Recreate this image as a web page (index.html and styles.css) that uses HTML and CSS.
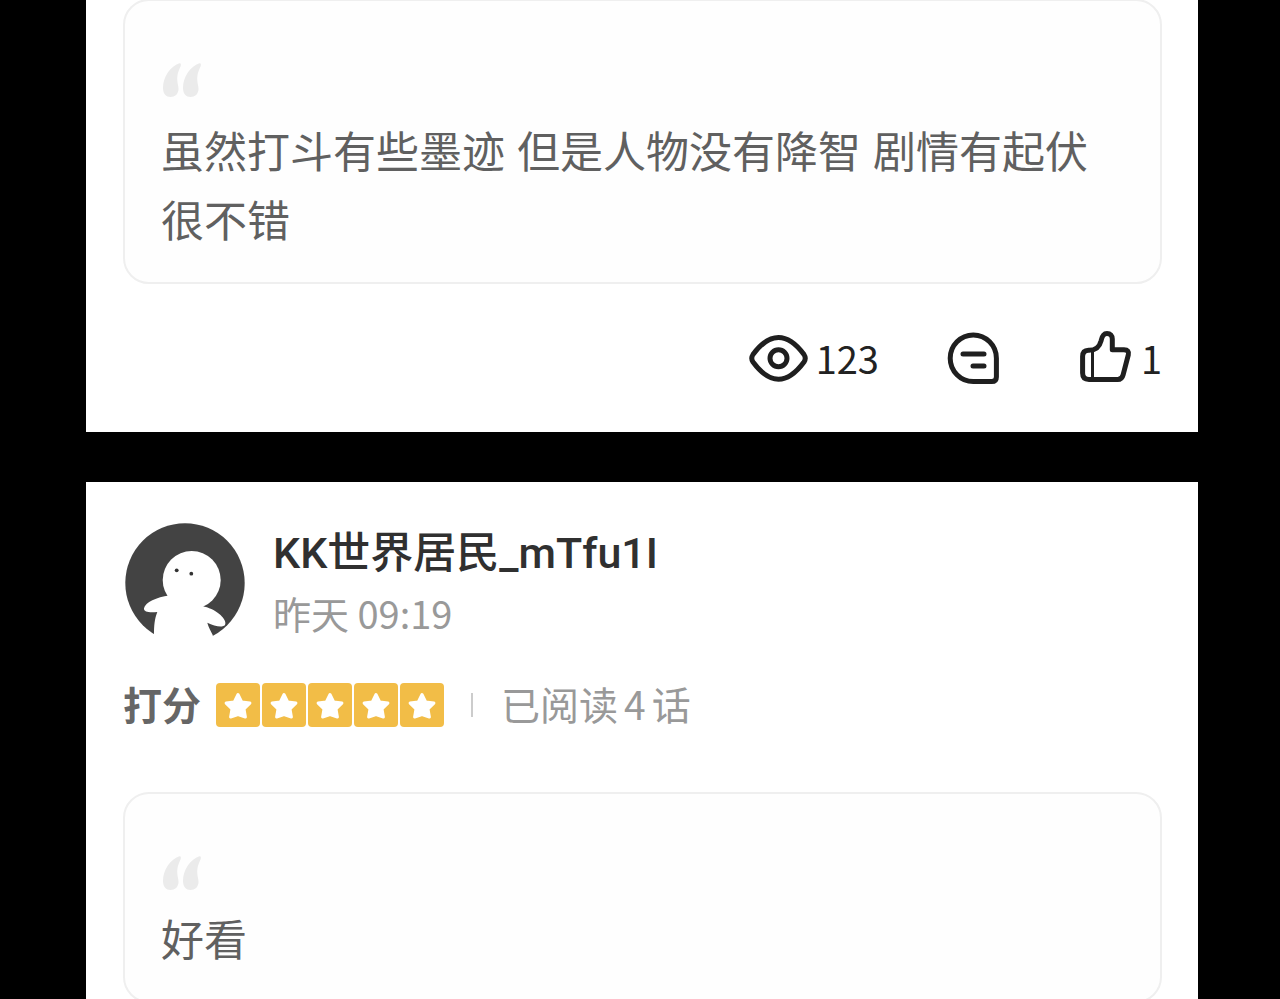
FILE: index.html
```html
<!DOCTYPE html>
<html lang="zh-CN">
<head>
  <meta charset="UTF-8">
  <meta name="viewport" content="width=device-width, initial-scale=1.0">
  <title>评论</title>
  <link rel="stylesheet" href="styles.css">
</head>
<body>
  <!-- shared shapes -->
  <svg class="defs" width="0" height="0" aria-hidden="true">
    <symbol id="quote" viewBox="0 0 42 35">
      <path id="mark" d="M18.500 .3C9 3.500 2 14 2 25c0 6 3.200 9 7.500 9s8-3 8-8c0-3.500-1.300-6-1.300-10 0-5 1.300-8 3.300-12.500 .8-2 .5-3.500-1-3.200z"/>
      <use href="#mark" x="20"/>
    </symbol>
    <symbol id="star" viewBox="0 0 44 44">
      <rect width="44" height="44" rx="4" fill="#f2bd47"/>
      <path d="M22 11.500l3.700 7.400 8.200 1.200-5.900 5.800 1.400 8.100-7.400-2.500-7.400 2.500 1.400-8.100-5.900-5.800 8.200-1.200z" fill="#fff" stroke="#fff" stroke-width="3" stroke-linejoin="round"/>
    </symbol>
  </svg>

  <main class="feed">
    <article class="card">
      <blockquote class="quote-box">
        <svg class="quote-mark"><use href="#quote"/></svg>
        <p class="quote-text">虽然打斗有些墨迹 但是人物没有降智 剧情有起伏很不错</p>
      </blockquote>
      <div class="actions">
        <span class="action">
          <svg class="icon" viewBox="0 0 60 60">
            <path d="M4 26.500C11 17 20 9.500 29.500 9.500S48 17 55 26.500q2.500 3.800 0 7.500C48 43.500 39 51.200 29.500 51.200S11 43.500 4 34q-2.500-3.700 0-7.500z"/>
            <circle cx="29.500" cy="30.300" r="8.500"/>
          </svg>
          <span>123</span>
        </span>
        <button class="action" type="button" aria-label="回复">
          <svg class="icon" viewBox="0 0 60 60">
            <path d="M30.300 53.600A23.100 23.300 0 1 1 53.400 30.300V49q0 4.600-4.600 4.600z"/>
            <path d="M20 26h21M30 38h11"/>
          </svg>
          <span></span>
        </button>
        <button class="action" type="button" aria-label="点赞 1">
          <svg class="icon" viewBox="0 0 60 60">
            <path d="M14.500 22.300C22 22.500 25.500 19 27 13c1-5 2.500-7.500 6-7.500 3.300 0 5.300 2 5.300 5.500v10.800H50q5.500 0 4.300 5l-5.200 20q-1.200 4.700-5.400 4.700H15q-6.400 0-6.400-6.400V28.500q0-6 5.900-6.200z"/>
            <path class="thin" d="M18.500 22v29"/>
          </svg>
          <span>1</span>
        </button>
      </div>
    </article>

    <article class="card">
      <header class="user">
        <svg class="avatar" viewBox="0 0 122 122">
          <circle cx="62" cy="61" r="59.700" fill="#434343"/>
          <g fill="#fff">
            <circle cx="68.700" cy="58" r="29"/>
            <path d="M46 73.500C34 75 22 80.500 21 86.300c-.5 4 6 4.500 13.300 3.700C31.500 97 31 104 31 113v9h60l-1.300-9c-2-4-4.200-8-5.400-12.300 7 3.300 15 5.300 17.700 2.300 3-5-8-15.500-20.300-18.300z"/>
          </g>
          <circle cx="53.700" cy="48.300" r="1.900" fill="#333"/>
          <circle cx="68.300" cy="51.700" r="1.900" fill="#333"/>
        </svg>
        <div>
          <h2 class="name">KK世界居民_mTfu1I</h2>
          <time class="date">昨天 09:19</time>
        </div>
      </header>
      <div class="rating">
        <strong class="rating-label">打分</strong>
        <div class="stars" role="img" aria-label="5">
          <svg><use href="#star"/></svg>
          <svg><use href="#star"/></svg>
          <svg><use href="#star"/></svg>
          <svg><use href="#star"/></svg>
          <svg><use href="#star"/></svg>
        </div>
        <span class="divider"></span>
        <span class="read">已阅读<span class="read-count">4</span>话</span>
      </div>
      <blockquote class="quote-box">
        <svg class="quote-mark"><use href="#quote"/></svg>
        <p class="quote-text short">好看</p>
      </blockquote>
    </article>
  </main>
</body>
</html>
```

FILE: styles.css
```css
* { box-sizing: border-box; }
body { margin: 0; background: #000; font-family: "Noto Sans CJK SC", sans-serif; color: #222; }
h2, p, blockquote { margin: 0; }
svg { display: block; flex: none; }
.defs { position: absolute; }

.feed { display: flex; flex-direction: column; gap: 50px; padding: 0 82px 0 86px; margin-top: -1px; }
.card { background: #fff; padding: 0 36px 44px 37px; }
.card + .card { padding-top: 40px; }

.quote-box { border: 2px solid #efefef; border-radius: 26px; padding: 62px 36px 25px; background: #fefefe; }
.quote-mark { width: 42px; height: 35px; fill: #ebebeb; margin-bottom: 21px; }
.quote-text { font-family: "Liberation Sans", "Noto Sans CJK SC", sans-serif; font-size: 43px; line-height: 69px; min-height: 64px; color: #606060; }
.quote-text.short { line-height: 58px; }

.actions { display: flex; justify-content: flex-end; gap: 64px; margin-top: 44px; }
.action { display: flex; align-items: center; gap: 7px; height: 60px; padding: 0; border: none; background: none; font-family: inherit; font-size: 38px; line-height: 60px; color: #222; }
button.action { cursor: pointer; }
.icon { width: 60px; height: 60px; fill: none; stroke: #1f1f1f; stroke-width: 5; stroke-linecap: round; stroke-linejoin: round; }
.icon .thin { stroke-width: 3; }

.user { display: flex; gap: 28px; }
.avatar { width: 122px; height: 122px; }
.name { font-family: Roboto, "Noto Sans CJK SC", sans-serif; font-size: 43px; font-weight: 500; line-height: 62px; color: #303030; }
.date { display: block; font-size: 38px; line-height: 58px; color: #999; }

.rating { display: flex; align-items: center; margin: 39px 0 65px; font-size: 39px; line-height: 40px; color: #999; }
.rating-label, .read { padding-bottom: 4px; }
.rating-label { color: #666; }
.stars { display: flex; gap: 2px; margin-left: 15px; }
.stars svg { width: 44px; height: 44px; }
.divider { width: 2px; height: 24px; margin: 0 28px 0 27px; background: #ccc; }
.read-count { margin: 0 6px; }
```
